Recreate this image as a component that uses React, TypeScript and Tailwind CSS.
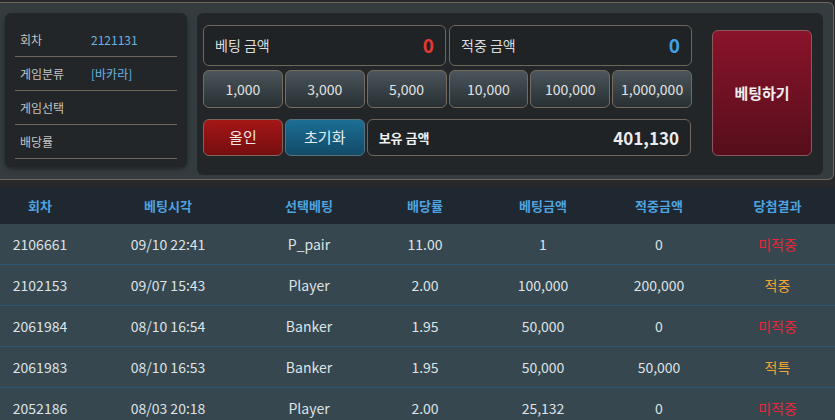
import React from "react";

const font = { fontFamily: '"Noto Sans CJK KR", "Noto Sans", sans-serif' };

const infoRows = [
  { label: "회차", value: "2121131" },
  { label: "게임분류", value: "[바카라]" },
  { label: "게임선택", value: "" },
  { label: "배당률", value: "" },
];

const chips = ["1,000", "3,000", "5,000", "10,000", "100,000", "1,000,000"];

type Row = {
  round: string;
  time: string;
  pick: string;
  odds: string;
  bet: string;
  win: string;
  result: string;
  hit: boolean;
};

const rows: Row[] = [
  { round: "2106661", time: "09/10 22:41", pick: "P_pair", odds: "11.00", bet: "1", win: "0", result: "미적중", hit: false },
  { round: "2102153", time: "09/07 15:43", pick: "Player", odds: "2.00", bet: "100,000", win: "200,000", result: "적중", hit: true },
  { round: "2061984", time: "08/10 16:54", pick: "Banker", odds: "1.95", bet: "50,000", win: "0", result: "미적중", hit: false },
  { round: "2061983", time: "08/10 16:53", pick: "Banker", odds: "1.95", bet: "50,000", win: "50,000", result: "적특", hit: true },
  { round: "2052186", time: "08/03 20:18", pick: "Player", odds: "2.00", bet: "25,132", win: "0", result: "미적중", hit: false },
];

const headers = ["회차", "베팅시각", "선택베팅", "배당률", "베팅금액", "적중금액", "당첨결과"];

const cols = "grid grid-cols-[80px_176px_106px_126px_110px_122px_1fr]";

export default function App() {
  return (
    <div className="w-[835px] h-[420px] overflow-hidden bg-[#262829] pt-[2px]" style={font}>
      {/* 상단 베팅 패널 */}
      <div className="h-[178px] w-[834px] bg-[#353c3f] border-t border-b border-r border-[#6e675b] rounded-r-md flex gap-[10px] pl-[5px] pt-[10px]">
        <div className="w-[182px] h-[154px] bg-[#222628] rounded-md shadow-[0_2px_4px_rgba(0,0,0,0.4)] px-[10px] pt-[10px]">
          {infoRows.map((r) => (
            <div
              key={r.label}
              className="h-[34px] border-b border-[#6e675b] flex items-center pl-[5px] text-[12px]"
            >
              <span className="w-[71px] text-[#c4c4c4]">{r.label}</span>
              <span className="text-[#6fb3e0]">{r.value}</span>
            </div>
          ))}
        </div>

        <div className="w-[626px] h-[162px] bg-[#222628] rounded-md flex pl-[6px] pt-[12px]">
          <div className="w-[489px] flex flex-col">
            <div className="grid grid-cols-2 gap-[3px] h-[41px]">
              <div className="border border-[#6e675b] rounded-md bg-[#1f2325] flex items-center justify-between px-[11px]">
                <span className="text-[14px] text-[#dcdcdc]">베팅 금액</span>
                <span className="text-[19px] font-bold text-[#e53935]">0</span>
              </div>
              <div className="border border-[#6e675b] rounded-md bg-[#1f2325] flex items-center justify-between px-[11px]">
                <span className="text-[14px] text-[#dcdcdc]">적중 금액</span>
                <span className="text-[19px] font-bold text-[#42a0e8]">0</span>
              </div>
            </div>

            <div className="grid grid-cols-6 gap-[2px] h-[38px] mt-[4px]">
              {chips.map((c) => (
                <button
                  key={c}
                  className="border border-[#756c5e] rounded-md bg-gradient-to-b from-[#4b555b] to-[#283034] text-[14px] text-[#e2e2e2]"
                >
                  {c}
                </button>
              ))}
            </div>

            <div className="grid grid-cols-6 gap-[2px] h-[37px] mt-[11px]">
              <button className="border border-[#80655c] rounded-md bg-gradient-to-b from-[#a51616] to-[#760e10] text-[15px] text-[#f0e6e6]">
                올인
              </button>
              <button className="border border-[#56707c] rounded-md bg-gradient-to-b from-[#1c6e95] to-[#124b68] text-[15px] text-[#e6eef2]">
                초기화
              </button>
              <div className="col-span-4 border border-[#6e675b] rounded-md bg-[#1f2325] flex items-center justify-between pl-[11px] pr-[11px] mr-[1px]">
                <span className="text-[13px] font-bold text-[#f2f2f2]">보유 금액</span>
                <span className="text-[17px] font-bold text-[#ececec]">401,130</span>
              </div>
            </div>
          </div>

          <button className="ml-[20px] mt-[5px] w-[100px] h-[126px] border border-[#8a5a5a] rounded-md bg-gradient-to-b from-[#8a132b] to-[#560e1c] text-[15px] font-bold text-[#eeeeee]">
            베팅하기
          </button>
        </div>
      </div>

      {/* 베팅 내역 */}
      <div className="mt-[8px]">
        <div className={`${cols} h-[36px] bg-[#1f2830] items-center text-[13px] font-bold text-[#4ea3e0]`}>
          {headers.map((h) => (
            <div key={h} className="text-center">
              {h}
            </div>
          ))}
        </div>
        {rows.map((r) => (
          <div
            key={r.round}
            className={`${cols} h-[41px] bg-[#37474f] border-b border-[#2b5977] items-center text-[14px] text-[#dde3e6]`}
          >
            <div className="text-center">{r.round}</div>
            <div className="text-center">{r.time}</div>
            <div className="text-center">{r.pick}</div>
            <div className="text-center">{r.odds}</div>
            <div className="text-center">{r.bet}</div>
            <div className="text-center">{r.win}</div>
            <div
              className={
                r.hit
                  ? "text-center text-[14px] text-[#f0a632]"
                  : "text-center text-[14px] text-[#e5283a]"
              }
            >
              {r.result}
            </div>
          </div>
        ))}
      </div>
    </div>
  );
}
